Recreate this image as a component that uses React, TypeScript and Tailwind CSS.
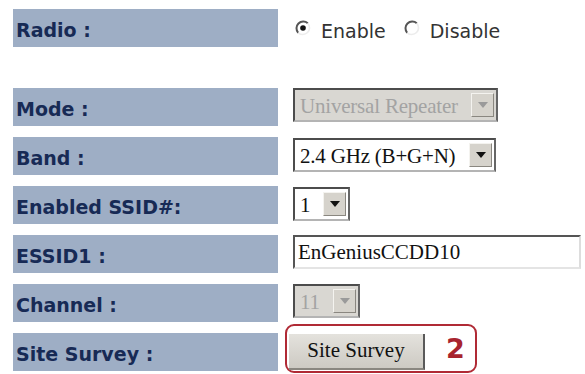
import React from "react";

const labelCls =
  "w-[265px] h-[38px] bg-[#9eaec5] flex items-center pl-[3px] pt-[5px] text-[19px] font-bold text-[#172a55] [font-family:'DejaVu_Sans',sans-serif] shrink-0";

function Arrow({ disabled }: { disabled?: boolean }) {
  return (
    <div className="w-[23px] h-[24px] bg-[#d6d3cc] border border-t-[#f4f3ef] border-l-[#f4f3ef] border-r-[#8a8780] border-b-[#8a8780] flex items-center justify-center shrink-0">
      <svg width="10" height="6" viewBox="0 0 10 6">
        <path d="M0 0 L10 0 L5 6 Z" fill={disabled ? "#9a9a9a" : "#111"} />
      </svg>
    </div>
  );
}

function Select({
  value,
  width,
  disabled,
}: {
  value: string;
  width: string;
  disabled?: boolean;
}) {
  return (
    <div
      className={`${width} h-[34px] flex items-center justify-between pl-[5px] pr-[2px] border-2 border-t-[#4c4c4c] border-l-[#4c4c4c] border-r-[#666] border-b-[#b4b4b4] ${
        disabled ? "bg-[#d9d7d2] text-[#a3a3a3]" : "bg-white text-[#111]"
      } text-[21px] [font-family:'Liberation_Serif',serif] leading-none`}
    >
      <span className="whitespace-nowrap pt-[2px] tracking-[-0.2px]">{value}</span>
      <Arrow disabled={disabled} />
    </div>
  );
}

function RadioDot({ checked }: { checked?: boolean }) {
  return (
    <svg width="16" height="16" viewBox="0 0 16 16" className="shrink-0">
      <circle cx="8" cy="8" r="6.8" fill="#fff" />
      <path d="M3.2 12.8 A6.8 6.8 0 0 1 12.8 3.2" stroke="#555" strokeWidth="2" fill="none" />
      <path d="M12.8 3.2 A6.8 6.8 0 0 1 3.2 12.8" stroke="#ececec" strokeWidth="1.6" fill="none" />
      {checked && <circle cx="8" cy="8" r="2.8" fill="#111" />}
    </svg>
  );
}

export default function App() {
  return (
    <div className="w-[585px] h-[374px] bg-white overflow-hidden pl-[13px] pt-[9px]">
      {/* Radio */}
      <div className="flex items-start gap-[15px] h-[36px]">
        <div className={`${labelCls} h-[36px]`}>Radio :</div>
        <div className="flex items-center h-[36px] pt-[9px] text-[19px] text-[#333] [font-family:'DejaVu_Sans',sans-serif]">
          <div className="ml-[2px] mr-[10px] -mt-[8px]">
            <RadioDot checked />
          </div>
          <span>Enable</span>
          <div className="ml-[18px] mr-[10px] -mt-[8px]">
            <RadioDot />
          </div>
          <span>Disable</span>
        </div>
      </div>

      <div className="flex flex-col gap-[11px] mt-[43px]">
        <div className="flex items-start gap-[15px]">
          <div className={labelCls}>Mode :</div>
          <Select value="Universal Repeater" width="w-[205px]" disabled />
        </div>
        <div className="flex items-start gap-[15px]">
          <div className={labelCls}>Band :</div>
          <div className="mt-[1px]">
            <Select value="2.4 GHz (B+G+N)" width="w-[203px]" />
          </div>
        </div>
        <div className="flex items-start gap-[15px]">
          <div className={labelCls}>Enabled SSID#:</div>
          <div className="mt-[1px]">
            <Select value="1" width="w-[57px]" />
          </div>
        </div>
        <div className="flex items-start gap-[15px]">
          <div className={labelCls}>ESSID1 :</div>
          <div className="w-[288px] h-[34px] flex items-center pl-[3px] pt-[2px] bg-white border-2 border-t-[#555] border-l-[#555] border-r-[#ddd] border-b-[#e4e4e4] text-[21px] text-[#111] [font-family:'Liberation_Serif',serif]">
            EnGeniusCCDD10
          </div>
        </div>
        <div className="flex items-start gap-[15px]">
          <div className={labelCls}>Channel :</div>
          <Select value="11" width="w-[67px]" disabled />
        </div>
        <div className="flex items-start gap-[15px]">
          <div className={labelCls}>Site Survey :</div>
          <div className="relative -ml-[8px] -mt-[9px] w-[192px] h-[49px] border-[2.5px] border-[#b02a35] rounded-[9px] flex items-center pl-[2px] pt-[6px]">
            <div className="w-[136px] h-[36px] flex items-center justify-center bg-gradient-to-b from-[#e4e2dd] to-[#cdcac3] border-r-2 border-r-[#5a5a5a] border-b-2 border-b-[#8a8780] text-[21px] text-[#111] [font-family:'Liberation_Serif',serif]">
              Site Survey
            </div>
            <span className="ml-[21px] -mt-[6px] text-[27px] font-semibold leading-none text-[#a8242e] [font-family:'DejaVu_Sans',sans-serif]">
              2
            </span>
          </div>
        </div>
      </div>
    </div>
  );
}
